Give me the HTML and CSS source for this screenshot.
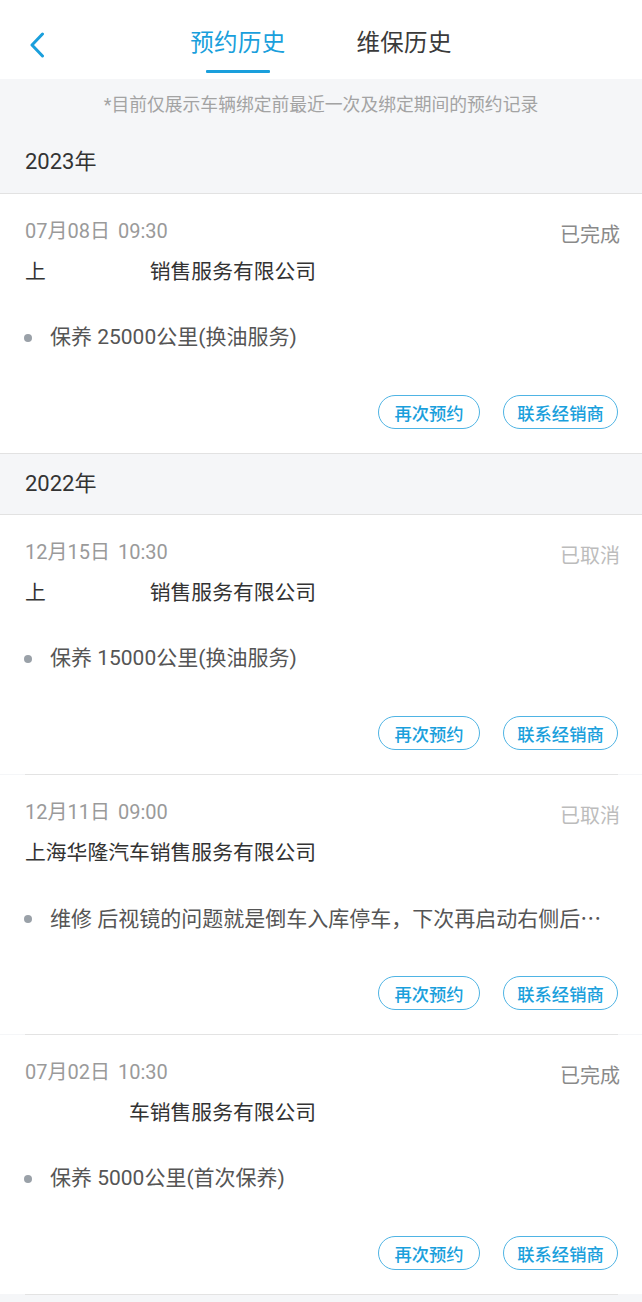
FILE: index.html
```html
<!DOCTYPE html>
<html lang="zh-CN">
<head>
<meta charset="utf-8">
<title>预约历史</title>
<link rel="stylesheet" href="styles.css">
</head>
<body>
<div class="page">
  <header class="topbar">
    <div class="back">
      <svg width="16" height="26" viewBox="0 0 16 26"><path d="M13.5 2 L3 13 L13.5 24" fill="none" stroke="#1a9fdc" stroke-width="3" stroke-linecap="round" stroke-linejoin="round"/></svg>
    </div>
    <nav class="tabs">
      <div class="tab active">预约历史<span class="bar"></span></div>
      <div class="tab">维保历史</div>
    </nav>
    <div></div>
  </header>

  <p class="notice">*目前仅展示车辆绑定前最近一次及绑定期间的预约记录</p>

  <section class="year-block">
    <div class="year first">2023年</div>
    <div class="card">
      <div class="row-top"><span class="date">07月08日<span class="time">09:30</span></span><span class="status done">已完成</span></div>
      <div class="company">上<span class="hidden">海华隆汽车</span>销售服务有限公司</div>
      <div class="item"><span class="dot"></span><span class="item-text">保养 25000公里(换油服务)</span></div>
      <div class="actions"><span class="btn b1">再次预约</span><span class="btn b2">联系经销商</span></div>
    </div>
  </section>

  <section class="year-block">
    <div class="year">2022年</div>
    <div class="card sep">
      <div class="row-top"><span class="date">12月15日<span class="time">10:30</span></span><span class="status cancel">已取消</span></div>
      <div class="company">上<span class="hidden">海华隆汽车</span>销售服务有限公司</div>
      <div class="item"><span class="dot"></span><span class="item-text">保养 15000公里(换油服务)</span></div>
      <div class="actions"><span class="btn b1">再次预约</span><span class="btn b2">联系经销商</span></div>
    </div>
    <div class="card sep">
      <div class="row-top"><span class="date">12月11日<span class="time">09:00</span></span><span class="status cancel">已取消</span></div>
      <div class="company">上海华隆汽车销售服务有限公司</div>
      <div class="item"><span class="dot"></span><span class="item-text">维修 后视镜的问题就是倒车入库停车，下次再启动右侧后<span class="ell">…</span></span></div>
      <div class="actions"><span class="btn b1">再次预约</span><span class="btn b2">联系经销商</span></div>
    </div>
    <div class="card sep">
      <div class="row-top"><span class="date">07月02日<span class="time">10:30</span></span><span class="status done">已完成</span></div>
      <div class="company"><span class="hidden">上海华隆汽</span>车销售服务有限公司</div>
      <div class="item"><span class="dot"></span><span class="item-text">保养 5000公里(首次保养)</span></div>
      <div class="actions"><span class="btn b1">再次预约</span><span class="btn b2">联系经销商</span></div>
    </div>
  </section>
</div>
</body>
</html>
```
FILE: styles.css
```css
* { box-sizing: border-box; }
html, body { margin: 0; padding: 0; }
body {
  background: #f5f6f8;
  font-family: Roboto, "Noto Sans CJK SC", "Noto Sans", sans-serif;
  color: #333;
}
.page { width: 642px; }

.topbar {
  height: 79px;
  background: #fff;
  display: grid;
  grid-template-columns: 1fr auto 1fr;
  align-items: start;
}
.back {
  padding: 32px 0 0 29px;
  height: 79px;
}
.back svg { display: block; }
.tabs {
  display: flex;
  gap: 71px;
  padding-top: 26px;
}
.tab {
  position: relative;
  font-size: 23.5px;
  line-height: 34px;
  color: #3a3a3a;
  letter-spacing: 0.3px;
}
.tab.active { color: #1a9fdc; }
.tab .bar {
  position: absolute;
  left: 16px;
  top: 44px;
  width: 64px;
  height: 3px;
  background: #1a9fdc;
  border-radius: 1px;
}

.notice {
  margin: 0;
  height: 55px;
  padding-top: 14px;
  text-align: center;
  font-size: 17.8px;
  line-height: 24px;
  color: #a3a3a3;
}

.year {
  height: 62px;
  padding: 15px 0 0 25px;
  font-size: 22px;
  line-height: 30px;
  color: #333;
  border-top: 1px solid #e2e2e2;
  border-bottom: 1px solid #e2e2e2;
  background: #f5f6f8;
}
.year.first { border-top: none; height: 60px; padding-top: 13px; }

.card {
  background: #fff;
  padding: 24px 22px 24px 24px;
}
.card.sep { position: relative; margin-bottom: 1px; }
.card.sep + .card.sep::before {
  content: "";
  position: absolute;
  left: 25px;
  right: 24px;
  top: -1px;
  height: 1px;
  background: #e3e3e3;
}
.card.sep:last-child::after {
  content: "";
  position: absolute;
  left: 25px;
  right: 24px;
  bottom: -1px;
  height: 1px;
  background: #e3e3e3;
}

.row-top {
  display: flex;
  justify-content: space-between;
  align-items: center;
  height: 26px;
}
.date {
  font-size: 20px;
  color: #9a9a9a;
  position: relative;
  top: -2px;
  padding-left: 1px;
}
.time { margin-left: 8px; }
.status { font-size: 20px; position: relative; top: 2px; }
.status.done { color: #8a8a8a; }
.status.cancel { color: #bcbcbc; }

.company {
  margin-top: 14px;
  height: 28px;
  font-size: 20.8px;
  line-height: 28px;
  color: #333;
  padding-left: 1px;
}
.hidden { color: #fff; }

.item {
  margin-top: 37px;
  height: 28px;
  display: flex;
  align-items: center;
}
.dot {
  width: 8px;
  height: 8px;
  border-radius: 50%;
  background: #9aa1a8;
  margin: 2px 18px 0 0;
  flex: none;
}
.item-text {
  font-size: 21px;
  line-height: 28px;
  color: #555;
  white-space: nowrap;
}
.ell { font-family: "Noto Sans CJK SC", sans-serif; }

.actions {
  margin-top: 44px;
  margin-right: 2px;
  display: flex;
  justify-content: flex-end;
  gap: 23px;
}
.btn {
  height: 34px;
  border: 1px solid #4fb4e4;
  border-radius: 17px;
  display: flex;
  align-items: center;
  justify-content: center;
  color: #1a9fdc;
  font-size: 17.3px;
  font-weight: 500;
}
.b1 { width: 102px; }
.b2 { width: 115px; }
```
